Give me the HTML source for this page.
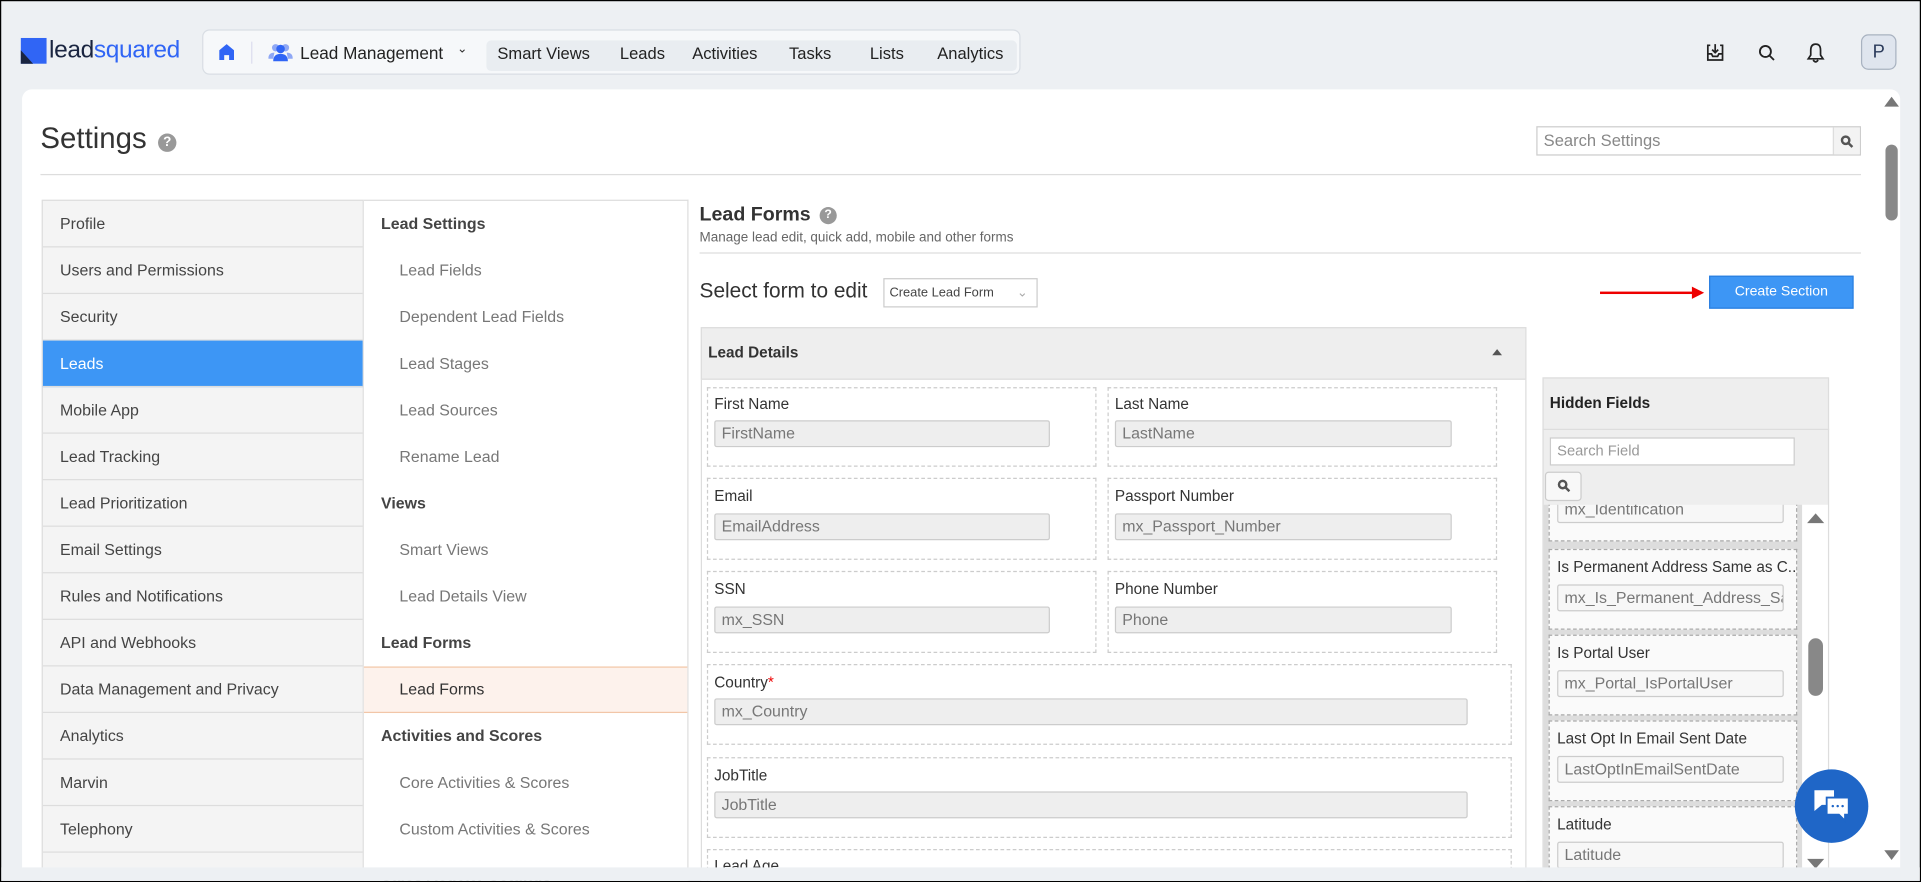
<!DOCTYPE html>
<html><head><meta charset="utf-8"><style>
*{box-sizing:border-box;margin:0;padding:0}
html,body{width:1921px;height:882px;overflow:hidden;background:#edf0f3}
#s{position:absolute;left:0;top:0;width:1568px;height:720px;transform:scale(1.22513);transform-origin:0 0;font-family:"Liberation Sans",sans-serif;color:#333;border:1px solid #000;background:#edf0f3;overflow:hidden}
.a{position:absolute}
.nav{left:164px;top:23px;width:668px;height:37px;border:1px solid #d9dee4;border-radius:6px;background:#f6f8fa}
.navin{left:231px;top:8px;width:433px;height:25px;background:#e9edf1;border-radius:4px}
.nt{font-size:13.5px;color:#222;top:11px}
.card{left:17px;top:72px;width:1533px;height:636px;background:#fff;border-radius:8px 8px 0 0}
.lm{left:33px;top:162px;width:263px;height:560px;background:#f4f4f4;border:1px solid #ddd}
.lm div{height:38px;line-height:37px;padding-left:14px;font-size:13px;color:#444;border-bottom:1px solid #ddd}
.sm{left:296px;top:162px;width:265px;height:560px;border:1px solid #ddd;border-left:none;background:#fff}
.sm div{height:38px;line-height:38px;font-size:13px;color:#777;padding-left:29px}
.sm div.h{color:#444;padding-left:14px;font-weight:bold;font-weight:600}
.fb{border:1px dashed #ccc}
.lab{font-size:12.5px;color:#333}
.inp{height:22px;background:#eee;border:1px solid #ccc;border-radius:2px;font-size:13px;color:#777;line-height:20px;padding-left:5px}
.hf{left:1263px;width:203px;height:66px;background:#fafafa;border:1px dashed #aaa}
.hf .lab{position:absolute;left:6px;top:7px;white-space:nowrap;overflow:hidden;width:195px}
.hf .inp{position:absolute;left:6px;top:28px;width:185px;background:#f7f7f7;white-space:nowrap;overflow:hidden}
</style></head><body><div id="s">
<!-- logo -->
<div class="a" style="left:16px;top:30px;width:21px;height:21px;background:#3065f5"></div>
<div class="a" style="left:16px;top:40px;width:0;height:0;border-left:10px solid #1a2540;border-top:11px solid transparent"></div>
<div class="a" style="left:39px;top:29px;font-size:20px;letter-spacing:-0.3px;color:#1a2540">lead<span style="color:#3065f5">squared</span></div>
<div class="a nav"><div class="a navin"></div>
<svg class="a" style="left:12px;top:10px" width="14" height="15" viewBox="0 0 14 15"><path d="M7 1 L13 6 V14 H9 V10 H5 V14 H1 V6Z" fill="#3065f5"/></svg>
<div class="a" style="left:39px;top:9px;width:1px;height:18px;background:#dde"></div>
<svg class="a" style="left:53px;top:10px" width="20" height="16" viewBox="0 0 20 16"><circle cx="6" cy="4" r="3" fill="#8fa8f5"/><circle cx="14" cy="4" r="3" fill="#8fa8f5"/><circle cx="10" cy="5" r="3.5" fill="#3065f5"/><path d="M4 15 Q4 9 10 9 Q16 9 16 15Z" fill="#3065f5"/><path d="M0 13 Q0 8 5 8 L4 13Z M20 13 Q20 8 15 8 L16 13Z" fill="#8fa8f5"/></svg>
<div class="a nt" style="left:79px;font-size:14px;top:10px">Lead Management</div>
<div class="a" style="left:207px;top:10px;font-size:10px">⌄</div>
<div class="a nt" style="left:240px">Smart Views</div>
<div class="a nt" style="left:340px">Leads</div>
<div class="a nt" style="left:399px">Activities</div>
<div class="a nt" style="left:478px">Tasks</div>
<div class="a nt" style="left:544px">Lists</div>
<div class="a nt" style="left:599px">Analytics</div>
</div>
<!-- top right icons -->
<svg class="a" style="left:1390px;top:33px" width="18" height="18" viewBox="0 0 18 18" fill="none" stroke="#222" stroke-width="1.4"><path d="M5 3H3V15H15V3H13M3 10H6L7 12H11L12 10H15M9 2V9M6.5 6.5L9 9L11.5 6.5"/></svg>
<svg class="a" style="left:1434px;top:35px" width="14" height="14" viewBox="0 0 14 14" fill="none" stroke="#222" stroke-width="1.5"><circle cx="6" cy="6" r="4.5"/><path d="M9.5 9.5L13 13"/></svg>
<svg class="a" style="left:1473px;top:33px" width="16" height="18" viewBox="0 0 16 18" fill="none" stroke="#222" stroke-width="1.4"><path d="M8 2C5 2 4 4 4 7V11L2 14H14L12 11V7C12 4 11 2 8 2ZM6 15Q8 18 10 15"/></svg>
<div class="a" style="left:1518px;top:27px;width:29px;height:29px;border:1px solid #a8b2c0;border-radius:6px;background:#dfe5ee;text-align:center;line-height:27px;font-size:15px;color:#2a3a5a">P</div>
<!-- card -->
<div class="a card"></div>
<div class="a" style="left:32px;top:99px;font-size:24px;color:#333">Settings</div>
<div class="a" style="left:128px;top:108px;width:15px;height:15px;border-radius:50%;background:#999;color:#fff;font-size:11px;text-align:center;line-height:15px;font-weight:bold">?</div>
<div class="a" style="left:1253px;top:102px;width:265px;height:24px;border:1px solid #ccc;font-size:13.5px;color:#888;line-height:22px;padding-left:5px">Search Settings</div>
<div class="a" style="left:1495px;top:103px;width:22px;height:22px;background:#f3f3f3;border-left:1px solid #ddd"></div>
<svg class="a" style="left:1501px;top:109px" width="11" height="11" viewBox="0 0 11 11" fill="none" stroke="#555" stroke-width="2"><circle cx="4.5" cy="4.5" r="3"/><path d="M7 7L10 10"/></svg>
<div class="a" style="left:32px;top:141px;width:1486px;height:1px;background:#ddd"></div>
<!-- page scrollbar -->
<div class="a" style="left:1537px;top:78px;width:0;height:0;border-left:6px solid transparent;border-right:6px solid transparent;border-bottom:8px solid #777"></div>
<div class="a" style="left:1538px;top:117px;width:10px;height:62px;background:#888;border-radius:5px"></div>
<div class="a" style="left:1537px;top:693px;width:0;height:0;border-left:6px solid transparent;border-right:6px solid transparent;border-top:8px solid #777"></div>
<!-- left menu -->
<div class="a lm">
<div>Profile</div><div>Users and Permissions</div><div>Security</div>
<div style="background:#3d96f5;color:#fff">Leads</div>
<div>Mobile App</div><div>Lead Tracking</div><div>Lead Prioritization</div><div>Email Settings</div><div>Rules and Notifications</div><div>API and Webhooks</div><div>Data Management and Privacy</div><div>Analytics</div><div>Marvin</div><div>Telephony</div><div></div>
</div>
<div class="a sm">
<div class="h">Lead Settings</div><div>Lead Fields</div><div>Dependent Lead Fields</div><div>Lead Stages</div><div>Lead Sources</div><div>Rename Lead</div>
<div class="h">Views</div><div>Smart Views</div><div>Lead Details View</div>
<div class="h">Lead Forms</div>
<div style="background:#fdf2ec;border-top:1px solid #f2c6a8;border-bottom:1px solid #f2c6a8;color:#333;line-height:36px">Lead Forms</div>
<div class="h">Activities and Scores</div><div>Core Activities &amp; Scores</div><div>Custom Activities &amp; Scores</div>
<div class="h">Sales Activity Settings</div>
</div>
<!-- content -->
<div class="a" style="left:570px;top:166px;font-size:16px;color:#333;font-weight:600">Lead Forms</div>
<div class="a" style="left:668px;top:168px;width:14px;height:14px;border-radius:50%;background:#999;color:#fff;font-size:10px;text-align:center;line-height:14px;font-weight:bold">?</div>
<div class="a" style="left:570px;top:187px;font-size:11px;color:#666">Manage lead edit, quick add, mobile and other forms</div>
<div class="a" style="left:570px;top:205px;width:948px;height:1px;background:#ddd"></div>
<div class="a" style="left:570px;top:227px;font-size:17px;color:#333">Select form to edit</div>
<div class="a" style="left:720px;top:226px;width:126px;height:24px;border:1px solid #ccc;font-size:10.5px;color:#444;line-height:22px;padding-left:4px">Create Lead Form<span style="position:absolute;left:108px;color:#aaa">⌄</span></div>
<div class="a" style="left:1305px;top:237px;width:80px;height:2px;background:#e00"></div>
<div class="a" style="left:1380px;top:233px;width:0;height:0;border-left:10px solid #e00;border-top:5px solid transparent;border-bottom:5px solid transparent"></div>
<div class="a" style="left:1394px;top:224px;width:118px;height:27px;background:#3d96f5;border:1px solid #2a7fe0;color:#fff;font-size:11.5px;text-align:center;line-height:25px">Create Section</div>
<!-- lead details -->
<div class="a" style="left:571px;top:266px;width:674px;height:460px;border:1px solid #ddd;background:#fff"></div>
<div class="a" style="left:571px;top:266px;width:674px;height:43px;background:#eee;border:1px solid #ddd"></div>
<div class="a" style="left:577px;top:280px;font-size:12.5px;font-weight:bold;color:#333">Lead Details</div>
<div class="a" style="left:1217px;top:284px;width:0;height:0;border-left:4px solid transparent;border-right:4px solid transparent;border-bottom:5px solid #555"></div>

<div class="a fb" style="left:576px;top:315px;width:318px;height:65px"></div>
<div class="a lab" style="left:582px;top:322px">First Name</div>
<div class="a inp" style="left:582px;top:342px;width:274px">FirstName</div>
<div class="a fb" style="left:903px;top:315px;width:318px;height:65px"></div>
<div class="a lab" style="left:909px;top:322px">Last Name</div>
<div class="a inp" style="left:909px;top:342px;width:275px">LastName</div>

<div class="a fb" style="left:576px;top:389px;width:318px;height:67px"></div>
<div class="a lab" style="left:582px;top:397px">Email</div>
<div class="a inp" style="left:582px;top:418px;width:274px">EmailAddress</div>
<div class="a fb" style="left:903px;top:389px;width:318px;height:67px"></div>
<div class="a lab" style="left:909px;top:397px">Passport Number</div>
<div class="a inp" style="left:909px;top:418px;width:275px">mx_Passport_Number</div>

<div class="a fb" style="left:576px;top:465px;width:318px;height:67px"></div>
<div class="a lab" style="left:582px;top:473px">SSN</div>
<div class="a inp" style="left:582px;top:494px;width:274px">mx_SSN</div>
<div class="a fb" style="left:903px;top:465px;width:318px;height:67px"></div>
<div class="a lab" style="left:909px;top:473px">Phone Number</div>
<div class="a inp" style="left:909px;top:494px;width:275px">Phone</div>

<div class="a fb" style="left:576px;top:541px;width:657px;height:66px"></div>
<div class="a lab" style="left:582px;top:549px">Country<span style="color:#e00">*</span></div>
<div class="a inp" style="left:582px;top:569px;width:615px">mx_Country</div>
<div class="a fb" style="left:576px;top:617px;width:657px;height:66px"></div>
<div class="a lab" style="left:582px;top:625px">JobTitle</div>
<div class="a inp" style="left:582px;top:645px;width:615px">JobTitle</div>
<div class="a fb" style="left:576px;top:692px;width:657px;height:66px"></div>
<div class="a lab" style="left:582px;top:699px">Lead Age</div>

<!-- hidden fields -->
<div class="a" style="left:1258px;top:307px;width:234px;height:420px;background:#eee;border:1px solid #ddd"></div>
<div class="a" style="left:1264px;top:321px;font-size:12.5px;font-weight:bold;color:#222">Hidden Fields</div>
<div class="a" style="left:1258px;top:349px;width:234px;height:1px;background:#ddd"></div>
<div class="a" style="left:1264px;top:356px;width:200px;height:23px;background:#fff;border:1px solid #ccc;font-size:12px;color:#999;line-height:21px;padding-left:5px">Search Field</div>
<div class="a" style="left:1260px;top:384px;width:30px;height:24px;background:#f8f8f8;border:1px solid #ccc;border-radius:3px"></div>
<svg class="a" style="left:1270px;top:390px" width="11" height="11" viewBox="0 0 11 11" fill="none" stroke="#555" stroke-width="2"><circle cx="4.5" cy="4.5" r="3"/><path d="M7 7L10 10"/></svg>
<div class="a" style="left:1259px;top:411px;width:211px;height:300px;background:#ddd;overflow:hidden">
<div class="a hf" style="left:4px;top:-36px"><div class="inp" style="top:28px">mx_Identification</div></div>
<div class="a hf" style="left:4px;top:36px"><div class="lab">Is Permanent Address Same as C...</div><div class="inp">mx_Is_Permanent_Address_Same</div></div>
<div class="a hf" style="left:4px;top:106px"><div class="lab">Is Portal User</div><div class="inp">mx_Portal_IsPortalUser</div></div>
<div class="a hf" style="left:4px;top:176px"><div class="lab">Last Opt In Email Sent Date</div><div class="inp">LastOptInEmailSentDate</div></div>
<div class="a hf" style="left:4px;top:246px"><div class="lab">Latitude</div><div class="inp">Latitude</div></div>
</div>
<div class="a" style="left:1470px;top:411px;width:21px;height:300px;background:#fff"></div>
<div class="a" style="left:1474px;top:418px;width:0;height:0;border-left:7px solid transparent;border-right:7px solid transparent;border-bottom:8px solid #777"></div>
<div class="a" style="left:1475px;top:520px;width:12px;height:47px;background:#888;border-radius:6px"></div>
<div class="a" style="left:1474px;top:700px;width:0;height:0;border-left:7px solid transparent;border-right:7px solid transparent;border-top:8px solid #777"></div>
<!-- bottom clip band -->
<div class="a" style="left:0;top:707px;width:1568px;height:20px;background:#edf0f3"></div>
<!-- chat -->
<div class="a" style="left:1464px;top:627px;width:60px;height:60px;border-radius:50%;background:#1f66c7"></div>
<svg class="a" style="left:1478px;top:642px" width="32" height="30" viewBox="0 0 32 30"><path d="M2 2H18V14H8L2 19Z" fill="#fff"/><path d="M12 8H30V22H27V27L22 22H12Z" fill="#fff" stroke="#1f66c7" stroke-width="1.5"/><circle cx="17" cy="15" r="1" fill="#1f66c7"/><circle cx="21" cy="15" r="1" fill="#1f66c7"/><circle cx="25" cy="15" r="1" fill="#1f66c7"/></svg>
</div></body></html>
